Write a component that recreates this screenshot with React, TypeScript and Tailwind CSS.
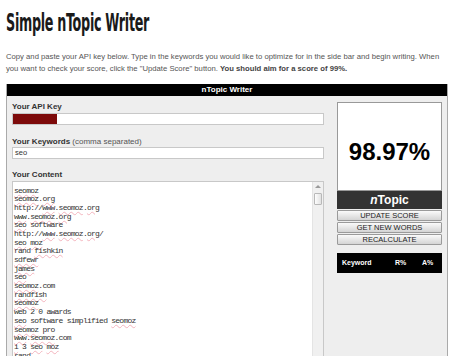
const lines: string[] = [
  "seomoz",
  "seomoz.org",
  "http://www.seomoz.org",
  "www.seomoz.org",
  "seo software",
  "http://www.seomoz.org/",
  "seo moz",
  "rand fishkin",
  "sdfewr",
  "james",
  "seo",
  "seomoz.com",
  "randfish",
  "seomoz",
  "web 2 0 awards",
  "seo software simplified seomoz",
  "seomoz pro",
  "www.seomoz.com",
  "i 3 seo moz",
  "rand",
];

// words the spell checker flags
const flagged = new Set(["seomoz", "org", "www", "seo", "moz", "fishkin", "sdfewr", "james", "randfish", "i"]);

function Line({ text }: { text: string }) {
  const parts = text.split(/([a-z]+)/);
  return (
    <div className="h-[8.7px] whitespace-pre">
      {parts.map((p, i) =>
        flagged.has(p) ? (
          <span key={i} className="underline decoration-wavy decoration-[#f3b3bd] decoration-1 underline-offset-[1px]">
            {p}
          </span>
        ) : (
          <span key={i}>{p}</span>
        )
      )}
    </div>
  );
}

function Button({ label }: { label: string }) {
  return (
    <div className="h-[11px] flex items-center justify-center border border-[#9a9a9a] rounded-[1px] bg-gradient-to-b from-[#fafafa] to-[#d4d4d4] text-[7.5px] leading-none text-[#222] uppercase">
      {label}
    </div>
  );
}

export default function App() {
  return (
    <div className="h-[356px] overflow-hidden bg-white pl-[6px]" style={{ fontFamily: '"Liberation Sans", Arial, sans-serif' }}>
      {/* Title */}
      <h1
        className="pt-[11px] text-[24px] leading-[24px] font-bold text-[#1a1a1a] tracking-[-0.5px] origin-left scale-x-[0.59] whitespace-nowrap"
        style={{ fontFamily: '"Liberation Sans Narrow", "DejaVu Sans Condensed", "Liberation Sans", sans-serif' }}
      >
        Simple nTopic Writer
      </h1>

      {/* Intro */}
      <p className="mt-[16px] pr-[8px] text-[7.7px] leading-[12px] text-[#555]">
        Copy and paste your API key below. Type in the keywords you would like to optimize for in the side bar and begin
        writing. When you want to check your score, click the "Update Score" button.{" "}
        <strong className="font-bold text-[#444]">You should aim for a score of 99%.</strong>
      </p>

      {/* Writer panel */}
      <div className="mt-[9px] w-[442px] border-x border-[#aaa] bg-[#eeeeee] h-[300px]">
        <div className="h-[12px] bg-black text-white text-[8px] font-bold leading-[12px] text-center">nTopic Writer</div>

        <div className="flex gap-[13px] pl-[5px] pr-[4px] pt-[6px]">
          {/* Left column */}
          <div className="w-[312px] text-[8px] text-[#333]">
            <div className="h-[10px] leading-[10px] font-bold">Your API Key</div>
            <div className="mt-[1px] h-[12px] border border-[#c8c8c8] bg-white">
              <div className="w-[44px] h-full bg-[#7d0a0a]" />
            </div>

            <div className="mt-[12px] h-[10px] leading-[10px] font-bold">
              Your Keywords <span className="font-normal text-[#555]">(comma separated)</span>
            </div>
            <div className="h-[12px] border border-[#c8c8c8] bg-white pl-[2px] text-[7.5px] leading-[10px] text-[#333]">
              seo
            </div>

            <div className="mt-[11px] h-[10px] leading-[10px] font-bold">Your Content</div>
            <div className="mt-[1px] flex h-[200px] border border-[#c8c8c8] bg-white">
              <div
                className="flex-1 pl-[1px] pt-[2.5px] text-[8px] tracking-[-0.75px] text-[#333]"
                style={{ fontFamily: '"Liberation Mono", "DejaVu Sans Mono", monospace' }}
              >
                {lines.map((l, i) => (
                  <Line key={i} text={l} />
                ))}
              </div>
              {/* scrollbar */}
              <div className="w-[11px] bg-[#f0f0f0] border-l border-[#e4e4e4] flex flex-col items-center">
                <div className="mt-[3px] w-0 h-0 border-x-[3px] border-x-transparent border-b-[3px] border-b-[#9a9a9a]" />
                <div className="mt-[5px] w-[8px] h-[12px] rounded-[1px] border border-[#b8b8b8] bg-gradient-to-r from-[#fdfdfd] to-[#e2e2e2]" />
              </div>
            </div>
          </div>

          {/* Right column */}
          <div className="w-[105px] flex flex-col">
            <div className="h-[89px] border border-[#999] bg-white pt-[37px] text-center text-[24px] leading-[24px] font-bold text-black">
              98.97%
            </div>
            <div className="h-[18px] bg-[#333] text-white text-[12px] leading-[18px] font-bold text-center">
              <i>n</i>Topic
            </div>
            <div className="mt-[1px] flex flex-col gap-[1px]">
              <Button label="Update Score" />
              <Button label="Get New Words" />
              <Button label="Recalculate" />
            </div>
            <div className="mt-[8px] h-[20px] bg-black text-white text-[7px] font-bold flex items-center pl-[5px]">
              <span className="w-[53px]">Keyword</span>
              <span className="w-[27px]">R%</span>
              <span>A%</span>
            </div>
          </div>
        </div>
      </div>
    </div>
  );
}
